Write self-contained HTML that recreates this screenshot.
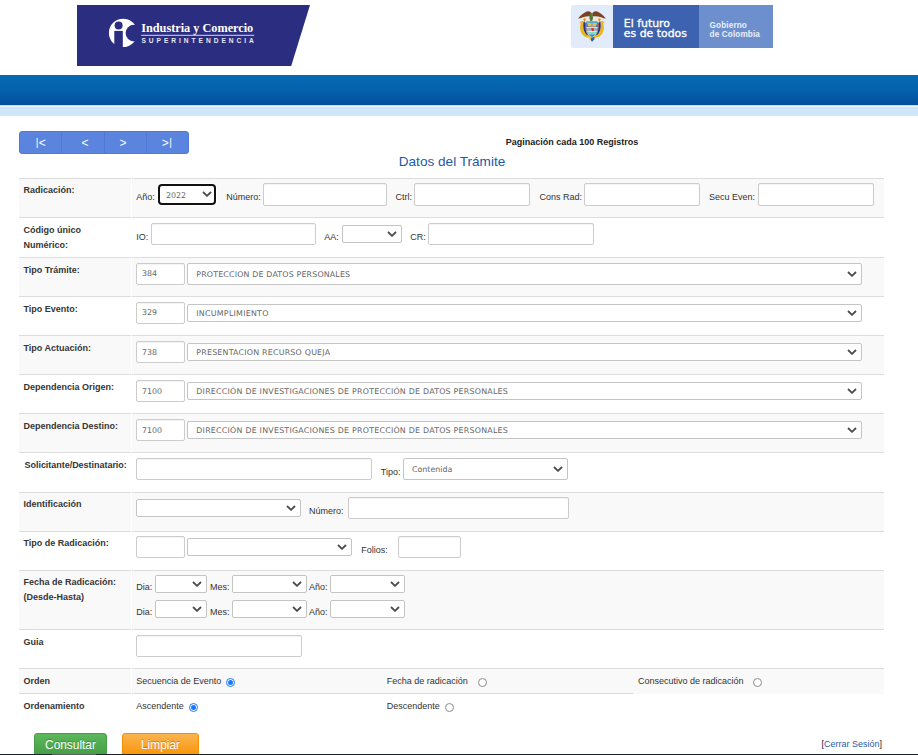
<!DOCTYPE html><html lang="es"><head><meta charset="utf-8"><title>Datos del Trámite</title><style>
*{box-sizing:border-box;margin:0;padding:0}
html,body{width:918px;height:755px;overflow:hidden;background:#fff}
body{position:relative;font-family:"Liberation Sans",Arial,sans-serif;font-size:9px;color:#333}
.a{position:absolute}
.lb{position:absolute;font-weight:bold;font-size:9px;line-height:15px;color:#353535;left:23.5px;white-space:nowrap}
.t{position:absolute;font-size:9px;line-height:11px;color:#333;white-space:nowrap}
.in{position:absolute;border:1px solid #ccc;border-radius:2px;background:#fff;box-shadow:inset 0 1px 1px rgba(0,0,0,.05);font-family:"DejaVu Sans",Verdana,sans-serif;font-size:7.9px;color:#666;padding-left:4.6px;padding-top:1.2px;white-space:nowrap;overflow:hidden}
.se{position:absolute;border:1px solid #c4c4c4;border-radius:2px;background:#fff;font-family:"DejaVu Sans",Verdana,sans-serif;font-size:7.9px;color:#666;padding-left:8px;padding-top:1.3px;white-space:nowrap;overflow:hidden}
.se svg{position:absolute;right:4px;top:50%;margin-top:-3px;width:10px;height:6px}
.ln{position:absolute;height:1px;background:#ddd}
.bg{position:absolute;background:#f9f9f9}
.rd{position:absolute;width:9px;height:9px;border-radius:50%;border:1px solid #8c8c8c;background:#fff}
.rd.on{border-color:#1a78ff}
.rd.on::after{content:"";position:absolute;left:1px;top:1px;width:5px;height:5px;border-radius:50%;background:#1a78ff}
</style></head><body>
<svg class="a" style="left:77px;top:5px" width="234" height="61" viewBox="0 0 234 61"><polygon points="0,0 233,0 214.2,61 0,61" fill="#2b2d80"/>
<circle cx="46.1" cy="27.9" r="14.2" fill="#fff"/><circle cx="57" cy="28.1" r="8.4" fill="#2b2d80"/><circle cx="41.6" cy="20.6" r="4" fill="#2b2d80"/><rect x="37.3" y="25.9" width="8.5" height="18" fill="#2b2d80"/>
<text x="64.2" y="26.8" font-family="Liberation Serif, Times New Roman, serif" font-weight="bold" font-size="12.25" fill="#fff">Industria y Comercio</text>
<rect x="64.2" y="29.8" width="113" height="1" fill="#d5d6ea"/>
<text x="64.4" y="38.2" font-family="Liberation Sans, Arial, sans-serif" font-weight="bold" font-size="6.6" fill="#e8e8f4" textLength="112.4" lengthAdjust="spacing">SUPERINTENDENCIA</text>
</svg>
<div class="a" style="left:571px;top:5px;width:42.5px;height:43px;background:#e1ebf9;border-radius:2px 0 0 2px"></div>
<div class="a" style="left:613.4px;top:5px;width:85.6px;height:43px;background:#3d62af"></div>
<div class="a" style="left:699px;top:5px;width:74.2px;height:43px;background:#6d8fce"></div>
<div class="a" style="left:623.8px;top:18.5px;font-family:'DejaVu Sans',sans-serif;font-size:10.9px;line-height:10.8px;color:#fff;-webkit-text-stroke:0.35px #fff;white-space:nowrap">El futuro<br>es de todos</div>
<div class="a" style="left:709.6px;top:20.7px;font-family:'Liberation Sans',sans-serif;font-weight:bold;font-size:8.2px;line-height:9px;color:#eaf0fa;letter-spacing:0.12px;white-space:nowrap">Gobierno<br>de Colombia</div>
<svg class="a" style="left:572px;top:6px" width="40" height="40" viewBox="0 0 40 40"><defs><filter id="bl" x="-10%" y="-10%" width="120%" height="120%"><feGaussianBlur stdDeviation="0.45"/></filter></defs><g filter="url(#bl)">
<path d="M6 12.6 C8.5 9.5 12.5 5.6 16.2 5.2 C18 5.2 19.3 6.2 19.8 7.6 L19.6 10.6 C17 10 13.5 10.4 10.5 11.6 C9 12.1 7.4 12.6 6 12.6Z" fill="#7e4124"/>
<path d="M34 12.6 C31.5 9.5 27.5 5.6 23.8 5.2 C22 5.2 20.7 6.2 20.2 7.6 L20.4 10.6 C23 10 26.5 10.4 29.5 11.6 C31 12.1 32.6 12.6 34 12.6Z" fill="#7e4124"/>
<path d="M9 12.2 C12 11 16 10.8 19 11.5 L19 14.5 L11 15 Z" fill="#f3e6d4"/><path d="M31 12.2 C28 11 24 10.8 21 11.5 L21 14.5 L29 15 Z" fill="#f3e6d4"/>
<ellipse cx="19.2" cy="11.2" rx="1.7" ry="3.9" fill="#4f7d3c"/><circle cx="19.5" cy="12.6" r="0.8" fill="#b0402c"/>
<path d="M7 16 L10 15.4 L8.5 17Z" fill="#e89a6a"/><path d="M33 16 L30 15.4 L31.5 17Z" fill="#e89a6a"/>
<circle cx="12.6" cy="13.6" r="1.3" fill="#e3a53a"/><circle cx="27.4" cy="13.6" r="1.3" fill="#e3a53a"/><rect x="12.2" y="13" width="0.9" height="3.4" fill="#c98a30"/><rect x="26.9" y="13" width="0.9" height="3.4" fill="#c98a30"/>
<path d="M9.6 15 C7.6 19 7.6 24.5 10 28 C12 30.8 15 32 17.6 31.4 L18.6 29.4 C15 29.2 12.6 26.6 11.8 23 C11.2 20.2 11.4 17.4 12.2 15.2Z" fill="#e7b71e"/>
<path d="M30.4 15 C32.4 19 32.4 24.5 30 28 C28 30.8 25 32 22.4 31.4 L21.4 29.4 C25 29.2 27.4 26.6 28.2 23 C28.8 20.2 28.6 17.4 27.8 15.2Z" fill="#e7b71e"/>
<path d="M11.6 16 C10.8 20 11.4 25 14 28.2 L16.4 29.6 C14 26.6 13 22 13.6 16.4Z" fill="#25338e"/>
<path d="M28.4 16 C29.2 20 28.6 25 26 28.2 L23.6 29.6 C26 26.6 27 22 26.4 16.4Z" fill="#25338e"/>
<path d="M13.4 17 C13 21 13.8 25.4 16 28.4 L17 28 C15 25 14.2 21 14.6 17Z" fill="#b23a2e"/>
<path d="M26.6 17 C27 21 26.2 25.4 24 28.4 L23 28 C25 25 25.8 21 25.4 17Z" fill="#b23a2e"/>
<path d="M14.4 15.6 L25.6 15.6 L25.8 21.2 L14.2 21.2Z" fill="#3d74ba"/>
<path d="M15 17 L25 17 L24 20.4 L16 20.4Z" fill="#e6bf52"/><rect x="19" y="16.6" width="2" height="4.2" fill="#b9a08a"/>
<rect x="15" y="15.8" width="10" height="1.2" fill="#48b0c8"/>
<rect x="14.2" y="21.2" width="11.6" height="0.7" fill="#f4ecc8"/>
<rect x="14.4" y="21.9" width="11.2" height="3.4" fill="#a9adb3"/>
<path d="M19.2 22 L21.4 22 L21.8 25 L20 25Z" fill="#c0302c"/>
<rect x="14.8" y="25.3" width="10.4" height="0.7" fill="#f4ecc8"/>
<path d="M15 26 L25 26 C24.6 27.4 23.8 28.4 22.8 29 L17.2 29 C16.2 28.4 15.4 27.4 15 26Z" fill="#86dcc8"/>
<path d="M17.2 28.4 L22.8 28.4 C22 29.8 21 30.6 20 31 C19 30.6 18 29.8 17.2 28.4Z" fill="#3c8cd0"/>
<path d="M17.4 31 L19.4 30.6 L19.2 34.6 L17.6 33.4Z" fill="#e7b71e"/>
<path d="M20.8 30.8 L22.6 31.2 L22.4 33.6 L21 34.6Z" fill="#b23a2e"/>
<path d="M19.2 31.4 L21 31.4 L21.2 34.8 L20 35.8 L19 34.6Z" fill="#2a62a8"/>
</g></svg>

<div class="a" style="left:0;top:75px;width:918px;height:30px;background:linear-gradient(#0669b4,#0563ae 45%,#03509c)"></div>
<div class="a" style="left:0;top:105px;width:918px;height:1px;background:#fbd67a"></div>
<div class="a" style="left:0;top:106px;width:918px;height:1px;background:#eef4f7"></div>
<div class="a" style="left:0;top:107px;width:918px;height:9px;background:#cfe7fb"></div>
<div class="a" style="left:19px;top:131px;width:170px;height:23px;background:#5b84de;border:1px solid #5179d3;border-radius:3px"></div>
<div class="a" style="left:25.5px;top:135.5px;width:30px;text-align:center;font-size:12px;line-height:14px;color:#fff"><span style="font-size:10.4px;position:relative;top:-0.6px;margin:0 0.3px">|</span>&lt;</div>
<div class="a" style="left:70px;top:135.5px;width:30px;text-align:center;font-size:12px;line-height:14px;color:#fff">&lt;</div>
<div class="a" style="left:108px;top:135.5px;width:30px;text-align:center;font-size:12px;line-height:14px;color:#fff">&gt;</div>
<div class="a" style="left:152px;top:135.5px;width:30px;text-align:center;font-size:12px;line-height:14px;color:#fff">&gt;<span style="font-size:10.4px;position:relative;top:-0.6px;margin:0 0.3px">|</span></div>
<div class="a" style="left:61px;top:132px;width:1px;height:21px;background:#5078d0"></div>
<div class="a" style="left:104px;top:132px;width:1px;height:21px;background:#5078d0"></div>
<div class="a" style="left:146px;top:132px;width:1px;height:21px;background:#5078d0"></div>
<div class="a" style="left:439px;top:136px;width:266px;text-align:center;font-size:9px;font-weight:bold;color:#222;line-height:12px">Paginación cada 100 Registros</div>
<div class="a" style="left:352px;top:152.6px;width:200px;text-align:center;font-size:13.6px;color:#1f58a8;line-height:18px">Datos del Trámite</div>
<div class="bg" style="left:19px;top:179px;width:112px;height:38px"></div>
<div class="bg" style="left:132px;top:179px;width:752px;height:38px"></div>
<div class="ln" style="left:19px;top:178px;width:112px"></div><div class="ln" style="left:132px;top:178px;width:752px"></div>
<div class="ln" style="left:19px;top:217px;width:112px"></div><div class="ln" style="left:132px;top:217px;width:752px"></div>
<div class="bg" style="left:19px;top:258px;width:112px;height:38px"></div>
<div class="bg" style="left:132px;top:258px;width:752px;height:38px"></div>
<div class="ln" style="left:19px;top:257px;width:112px"></div><div class="ln" style="left:132px;top:257px;width:752px"></div>
<div class="ln" style="left:19px;top:296px;width:112px"></div><div class="ln" style="left:132px;top:296px;width:752px"></div>
<div class="bg" style="left:19px;top:336px;width:112px;height:38px"></div>
<div class="bg" style="left:132px;top:336px;width:752px;height:38px"></div>
<div class="ln" style="left:19px;top:335px;width:112px"></div><div class="ln" style="left:132px;top:335px;width:752px"></div>
<div class="ln" style="left:19px;top:374px;width:112px"></div><div class="ln" style="left:132px;top:374px;width:752px"></div>
<div class="bg" style="left:19px;top:414px;width:112px;height:38px"></div>
<div class="bg" style="left:132px;top:414px;width:752px;height:38px"></div>
<div class="ln" style="left:19px;top:413px;width:112px"></div><div class="ln" style="left:132px;top:413px;width:752px"></div>
<div class="ln" style="left:19px;top:452px;width:112px"></div><div class="ln" style="left:132px;top:452px;width:752px"></div>
<div class="bg" style="left:19px;top:493px;width:112px;height:38px"></div>
<div class="bg" style="left:132px;top:493px;width:752px;height:38px"></div>
<div class="ln" style="left:19px;top:492px;width:112px"></div><div class="ln" style="left:132px;top:492px;width:752px"></div>
<div class="ln" style="left:19px;top:531px;width:112px"></div><div class="ln" style="left:132px;top:531px;width:752px"></div>
<div class="bg" style="left:19px;top:571px;width:112px;height:58px"></div>
<div class="bg" style="left:132px;top:571px;width:752px;height:58px"></div>
<div class="ln" style="left:19px;top:570px;width:112px"></div><div class="ln" style="left:132px;top:570px;width:752px"></div>
<div class="ln" style="left:19px;top:629px;width:112px"></div><div class="ln" style="left:132px;top:629px;width:752px"></div>
<div class="bg" style="left:19px;top:669px;width:112px;height:24px"></div>
<div class="bg" style="left:132px;top:669px;width:752px;height:24px"></div>
<div class="bg" style="left:633px;top:669px;width:251px;height:25px"></div>
<div class="ln" style="left:19px;top:668px;width:112px"></div><div class="ln" style="left:132px;top:668px;width:752px"></div>
<div class="ln" style="left:19px;top:693px;width:112px"></div><div class="ln" style="left:132px;top:693px;width:501px"></div>
<div class="lb" style="top:182.8px;left:23.5px">Radicación:</div>
<div class="lb" style="top:222.8px;left:23.5px">Código único<br>Numérico:</div>
<div class="lb" style="top:262.8px;left:23.5px">Tipo Trámite:</div>
<div class="lb" style="top:301.8px;left:23.5px">Tipo Evento:</div>
<div class="lb" style="top:340.8px;left:23.5px">Tipo Actuación:</div>
<div class="lb" style="top:379.8px;left:23.5px">Dependencia Origen:</div>
<div class="lb" style="top:418.8px;left:23.5px">Dependencia Destino:</div>
<div class="lb" style="top:457.8px;left:24.5px;letter-spacing:-0.03px">Solicitante/Destinatario:</div>
<div class="lb" style="top:496.8px;left:23.5px">Identificación</div>
<div class="lb" style="top:535.8px;left:23.5px">Tipo de Radicación:</div>
<div class="lb" style="top:574.8px;left:23.5px">Fecha de Radicación:<br>(Desde-Hasta)</div>
<div class="lb" style="top:634.8px;left:23.5px">Guia</div>
<div class="lb" style="top:673.8px;left:23.5px">Orden</div>
<div class="lb" style="top:698.8px;left:23.5px">Ordenamiento</div>
<div class="t" style="left:136.3px;top:191.5px">Año:</div>
<div class="se" style="left:158px;top:184px;width:58px;height:21px;line-height:18px;padding-top:1.9px;border:2px solid #111;border-radius:4px;padding-left:6px;line-height:16px;box-shadow:0 0 0 1px #fff">2022<svg style="right:2px;margin-top:-3.8px" viewBox="0 0 10 6"><path d="M1 1 L5 4.8 L9 1" fill="none" stroke="#4a4a4a" stroke-width="1.8" stroke-linecap="butt" stroke-linejoin="miter"/></svg></div>
<div class="t" style="left:226.2px;top:191.5px">Número:</div>
<div class="in" style="left:263px;top:183px;width:124px;height:23px;line-height:20px"></div>
<div class="t" style="left:395.6px;top:191.5px">Ctrl:</div>
<div class="in" style="left:414px;top:183px;width:116px;height:23px;line-height:20px"></div>
<div class="t" style="left:539.5px;top:191.5px">Cons Rad:</div>
<div class="in" style="left:584px;top:183px;width:116px;height:23px;line-height:20px"></div>
<div class="t" style="left:709px;top:191.5px">Secu Even:</div>
<div class="in" style="left:758px;top:183px;width:116px;height:23px;line-height:20px"></div>
<div class="t" style="left:136.3px;top:231.5px">IO:</div>
<div class="in" style="left:151px;top:223px;width:164.5px;height:21.5px;line-height:18.5px"></div>
<div class="t" style="left:324.2px;top:231.5px">AA:</div>
<div class="se" style="left:342px;top:225px;width:60px;height:17.5px;line-height:14.5px;padding-top:1.8px;"><svg viewBox="0 0 10 6"><path d="M1 1 L5 4.8 L9 1" fill="none" stroke="#4a4a4a" stroke-width="1.8" stroke-linecap="butt" stroke-linejoin="miter"/></svg></div>
<div class="t" style="left:410.3px;top:231.5px">CR:</div>
<div class="in" style="left:428.3px;top:223px;width:166px;height:21.5px;line-height:18.5px"></div>
<div class="in" style="left:136.3px;top:263px;width:48.5px;height:21.5px;line-height:18.5px">384</div>
<div class="se" style="left:187.3px;top:263px;width:674.5px;height:21.5px;line-height:18.5px;padding-top:1.9px;letter-spacing:0.158px">PROTECCION DE DATOS PERSONALES<svg viewBox="0 0 10 6"><path d="M1 1 L5 4.8 L9 1" fill="none" stroke="#4a4a4a" stroke-width="1.8" stroke-linecap="butt" stroke-linejoin="miter"/></svg></div>
<div class="in" style="left:136.3px;top:302.3px;width:48.5px;height:21.5px;line-height:18.5px">329</div>
<div class="se" style="left:187.3px;top:304.3px;width:674.5px;height:17.5px;line-height:14.5px;padding-top:1.8px;letter-spacing:0.25px">INCUMPLIMIENTO<svg viewBox="0 0 10 6"><path d="M1 1 L5 4.8 L9 1" fill="none" stroke="#4a4a4a" stroke-width="1.8" stroke-linecap="butt" stroke-linejoin="miter"/></svg></div>
<div class="in" style="left:136.3px;top:341.4px;width:48.5px;height:21.5px;line-height:18.5px">738</div>
<div class="se" style="left:187.3px;top:343.4px;width:674.5px;height:17.5px;line-height:14.5px;padding-top:1.8px;letter-spacing:0.21px">PRESENTACION RECURSO QUEJA<svg viewBox="0 0 10 6"><path d="M1 1 L5 4.8 L9 1" fill="none" stroke="#4a4a4a" stroke-width="1.8" stroke-linecap="butt" stroke-linejoin="miter"/></svg></div>
<div class="in" style="left:136.3px;top:380.4px;width:48.5px;height:21.5px;line-height:18.5px">7100</div>
<div class="se" style="left:187.3px;top:382.4px;width:674.5px;height:17.5px;line-height:14.5px;padding-top:1.8px;letter-spacing:0.224px">DIRECCIÓN DE INVESTIGACIONES DE PROTECCIÓN DE DATOS PERSONALES<svg viewBox="0 0 10 6"><path d="M1 1 L5 4.8 L9 1" fill="none" stroke="#4a4a4a" stroke-width="1.8" stroke-linecap="butt" stroke-linejoin="miter"/></svg></div>
<div class="in" style="left:136.3px;top:419.4px;width:48.5px;height:21.5px;line-height:18.5px">7100</div>
<div class="se" style="left:187.3px;top:421.4px;width:674.5px;height:17.5px;line-height:14.5px;padding-top:1.8px;letter-spacing:0.224px">DIRECCIÓN DE INVESTIGACIONES DE PROTECCIÓN DE DATOS PERSONALES<svg viewBox="0 0 10 6"><path d="M1 1 L5 4.8 L9 1" fill="none" stroke="#4a4a4a" stroke-width="1.8" stroke-linecap="butt" stroke-linejoin="miter"/></svg></div>
<div class="in" style="left:136.3px;top:458px;width:235.5px;height:21.5px;line-height:18.5px"></div>
<div class="t" style="left:380.8px;top:466.5px">Tipo:</div>
<div class="se" style="left:403px;top:458px;width:165px;height:21.5px;line-height:18.5px;padding-top:1.9px;letter-spacing:0px">Contenida<svg viewBox="0 0 10 6"><path d="M1 1 L5 4.8 L9 1" fill="none" stroke="#4a4a4a" stroke-width="1.8" stroke-linecap="butt" stroke-linejoin="miter"/></svg></div>
<div class="se" style="left:136.3px;top:499px;width:164.5px;height:17.5px;line-height:14.5px;padding-top:1.8px;"><svg viewBox="0 0 10 6"><path d="M1 1 L5 4.8 L9 1" fill="none" stroke="#4a4a4a" stroke-width="1.8" stroke-linecap="butt" stroke-linejoin="miter"/></svg></div>
<div class="t" style="left:308.9px;top:505.5px">Número:</div>
<div class="in" style="left:348px;top:497.2px;width:221px;height:21.5px;line-height:18.5px"></div>
<div class="in" style="left:136.3px;top:536px;width:48.5px;height:22px;line-height:19px"></div>
<div class="se" style="left:187.3px;top:538.4px;width:164.5px;height:17.5px;line-height:14.5px;padding-top:1.8px;"><svg viewBox="0 0 10 6"><path d="M1 1 L5 4.8 L9 1" fill="none" stroke="#4a4a4a" stroke-width="1.8" stroke-linecap="butt" stroke-linejoin="miter"/></svg></div>
<div class="t" style="left:361.2px;top:544.5px">Folios:</div>
<div class="in" style="left:398px;top:536px;width:63px;height:22px;line-height:19px"></div>
<div class="t" style="left:136.3px;top:581.5px">Dia:</div>
<div class="se" style="left:155.3px;top:575.3px;width:51.5px;height:17.5px;line-height:14.5px;padding-top:1.8px;"><svg viewBox="0 0 10 6"><path d="M1 1 L5 4.8 L9 1" fill="none" stroke="#4a4a4a" stroke-width="1.8" stroke-linecap="butt" stroke-linejoin="miter"/></svg></div>
<div class="t" style="left:209.9px;top:581.5px">Mes:</div>
<div class="se" style="left:232px;top:575.3px;width:74.7px;height:17.5px;line-height:14.5px;padding-top:1.8px;"><svg viewBox="0 0 10 6"><path d="M1 1 L5 4.8 L9 1" fill="none" stroke="#4a4a4a" stroke-width="1.8" stroke-linecap="butt" stroke-linejoin="miter"/></svg></div>
<div class="t" style="left:308.9px;top:581.5px">Año:</div>
<div class="se" style="left:330px;top:575.3px;width:74.7px;height:17.5px;line-height:14.5px;padding-top:1.8px;"><svg viewBox="0 0 10 6"><path d="M1 1 L5 4.8 L9 1" fill="none" stroke="#4a4a4a" stroke-width="1.8" stroke-linecap="butt" stroke-linejoin="miter"/></svg></div>
<div class="t" style="left:136.3px;top:607.3000000000001px">Dia:</div>
<div class="se" style="left:155.3px;top:600.1px;width:51.5px;height:17.5px;line-height:14.5px;padding-top:1.8px;"><svg viewBox="0 0 10 6"><path d="M1 1 L5 4.8 L9 1" fill="none" stroke="#4a4a4a" stroke-width="1.8" stroke-linecap="butt" stroke-linejoin="miter"/></svg></div>
<div class="t" style="left:209.9px;top:607.3000000000001px">Mes:</div>
<div class="se" style="left:232px;top:600.1px;width:74.7px;height:17.5px;line-height:14.5px;padding-top:1.8px;"><svg viewBox="0 0 10 6"><path d="M1 1 L5 4.8 L9 1" fill="none" stroke="#4a4a4a" stroke-width="1.8" stroke-linecap="butt" stroke-linejoin="miter"/></svg></div>
<div class="t" style="left:308.9px;top:607.3000000000001px">Año:</div>
<div class="se" style="left:330px;top:600.1px;width:74.7px;height:17.5px;line-height:14.5px;padding-top:1.8px;"><svg viewBox="0 0 10 6"><path d="M1 1 L5 4.8 L9 1" fill="none" stroke="#4a4a4a" stroke-width="1.8" stroke-linecap="butt" stroke-linejoin="miter"/></svg></div>
<div class="in" style="left:136.3px;top:635.3px;width:165.5px;height:21.5px;line-height:18.5px"></div>
<div class="t" style="left:136.3px;top:675.5px">Secuencia de Evento</div>
<div class="rd on" style="left:226px;top:678px"></div>
<div class="t" style="left:386.7px;top:675.5px">Fecha de radicación</div>
<div class="rd" style="left:478px;top:678px"></div>
<div class="t" style="left:637.9px;top:675.5px">Consecutivo de radicación</div>
<div class="rd" style="left:753px;top:678px"></div>
<div class="t" style="left:136.3px;top:700.5px">Ascendente</div>
<div class="rd on" style="left:189px;top:703px"></div>
<div class="t" style="left:386.7px;top:700.5px">Descendente</div>
<div class="rd" style="left:445px;top:703px"></div>
<div class="a" style="left:34px;top:733px;width:73px;height:24px;border-radius:3px 3px 0 0;border:1px solid #4a9e4a;background:linear-gradient(#5cb85c,#449d44);color:#fff;font-size:11.9px;line-height:22px;text-align:center;text-shadow:0 -1px 0 rgba(0,0,0,.25)">Consultar</div>
<div class="a" style="left:122px;top:733px;width:77px;height:24px;border-radius:3px 3px 0 0;border:1px solid #ef8f0a;background:linear-gradient(#fbb450,#f89406);color:#fff;font-size:11.9px;line-height:22px;text-align:center;text-shadow:0 -1px 0 rgba(0,0,0,.25)">Limpiar</div>
<div class="a" style="left:821.4px;top:739px;font-size:9px;line-height:11px;color:#2a5caa;white-space:nowrap"><span style="color:#223">[</span>Cerrar Sesión<span style="color:#223">]</span></div>
<div class="a" style="left:0;top:754px;width:918px;height:1px;background:#1d242c"></div>
<div class="a" style="left:52px;top:754px;width:44px;height:1px;background:#5a5d62"></div>
</body></html>
